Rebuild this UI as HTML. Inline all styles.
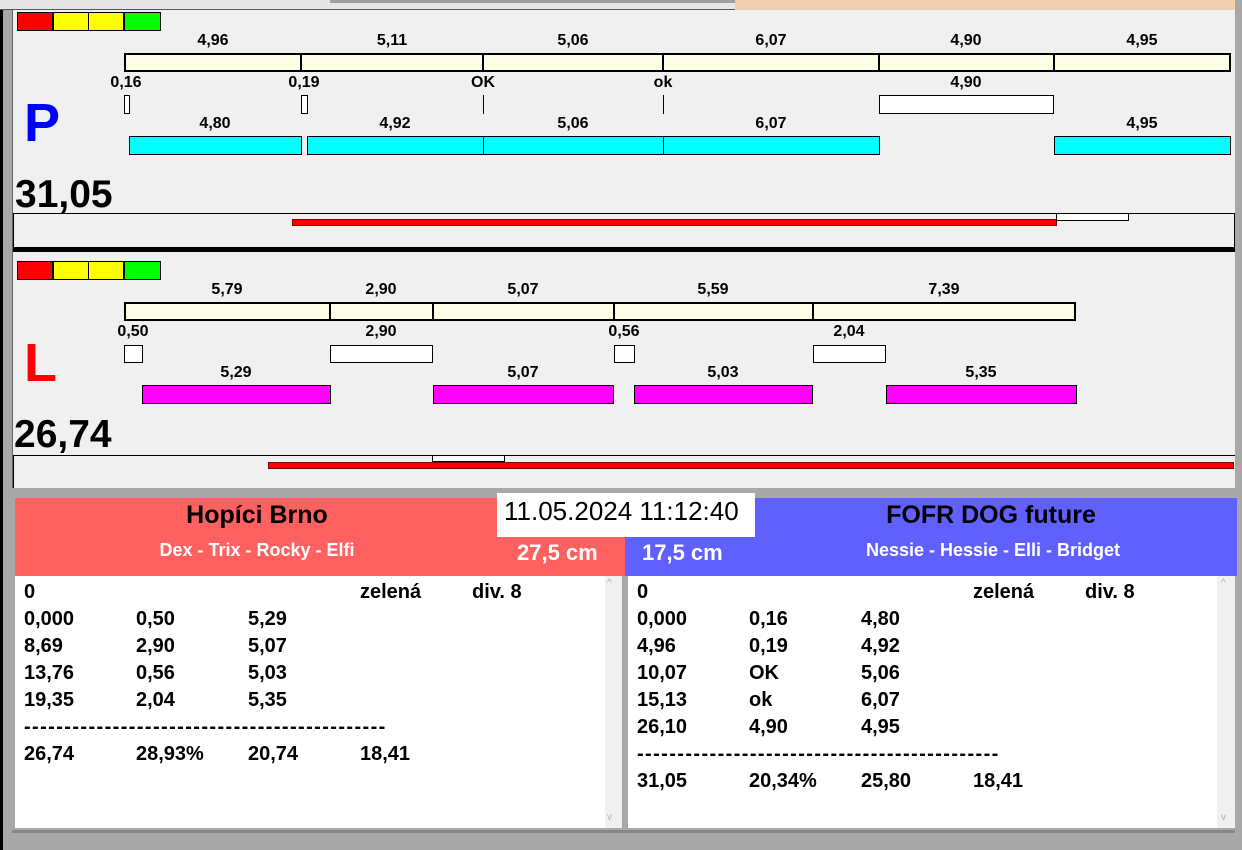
<!DOCTYPE html>
<html><head><meta charset="utf-8"><style>
*{margin:0;padding:0;box-sizing:border-box}
body{width:1242px;height:850px;background:#f0f0f0;position:relative;overflow:hidden;font-family:"Liberation Sans",Arial,sans-serif;font-weight:bold}
div{position:absolute}
.l{font-size:16px;color:#000;transform:translateX(-50%);white-space:nowrap;line-height:16px}
.y{background:#fffde6;border:2px solid #000}
.w{background:#fff;border:1px solid #000}
.c{background:#00ffff;border:1px solid #000}
.m{background:#ff00ff;border:1px solid #000}
.t{font-size:20px;line-height:27px;white-space:nowrap}
</style></head><body>
<div style="left:0;top:0;width:3px;height:850px;background:#000"></div>
<div style="left:3px;top:0;width:9px;height:850px;background:#a8a8a8"></div>
<div style="left:0;top:0;width:735px;height:10px;background:#e6e6e6;border-bottom:1px solid #555"></div>
<div style="left:330px;top:0;width:405px;height:3px;background:#a0a0a0"></div>
<div style="left:735px;top:0;width:500px;height:11px;background:#f0d0b0"></div>
<div style="left:1235px;top:0;width:7px;height:850px;background:#a8a8a8"></div>
<div style="left:12px;top:10px;width:1223px;height:480px;background:#f0f0f0;border-left:1px solid #666"></div>

<div style="left:17px;top:12px;width:36px;height:19px;background:#f00;border:1px solid #000"></div>
<div style="left:53px;top:12px;width:36px;height:19px;background:#ff0;border:1px solid #000"></div>
<div style="left:88px;top:12px;width:36px;height:19px;background:#ff0;border:1px solid #000"></div>
<div style="left:124px;top:12px;width:37px;height:19px;background:#0f0;border:1px solid #000"></div>

<div class="l" style="left:213px;top:33px">4,96</div>
<div class="l" style="left:392px;top:33px">5,11</div>
<div class="l" style="left:573px;top:33px">5,06</div>
<div class="l" style="left:771px;top:33px">6,07</div>
<div class="l" style="left:966px;top:33px">4,90</div>
<div class="l" style="left:1142px;top:33px">4,95</div>
<div class="y" style="left:124px;top:53px;width:1107px;height:19px"></div>
<div style="left:300px;top:53px;width:2px;height:19px;background:#000"></div>
<div style="left:482px;top:53px;width:2px;height:19px;background:#000"></div>
<div style="left:662px;top:53px;width:2px;height:19px;background:#000"></div>
<div style="left:878px;top:53px;width:2px;height:19px;background:#000"></div>
<div style="left:1053px;top:53px;width:2px;height:19px;background:#000"></div>

<div class="l" style="left:126px;top:75px">0,16</div>
<div class="l" style="left:304px;top:75px">0,19</div>
<div class="l" style="left:483px;top:75px">OK</div>
<div class="l" style="left:663px;top:75px">ok</div>
<div class="l" style="left:966px;top:75px">4,90</div>
<div class="w" style="left:124px;top:95px;width:6px;height:19px"></div>
<div class="w" style="left:301px;top:95px;width:7px;height:19px"></div>
<div style="left:483px;top:95px;width:1px;height:19px;background:#000"></div>
<div style="left:663px;top:95px;width:1px;height:19px;background:#000"></div>
<div class="w" style="left:879px;top:95px;width:175px;height:19px"></div>

<div style="left:24px;top:94px;font-size:54px;color:#0000ff;line-height:58px">P</div>
<div class="l" style="left:215px;top:116px">4,80</div>
<div class="l" style="left:395px;top:116px">4,92</div>
<div class="l" style="left:573px;top:116px">5,06</div>
<div class="l" style="left:771px;top:116px">6,07</div>
<div class="l" style="left:1142px;top:116px">4,95</div>
<div class="c" style="left:129px;top:136px;width:173px;height:19px"></div>
<div class="c" style="left:307px;top:136px;width:177px;height:19px"></div>
<div class="c" style="left:483px;top:136px;width:181px;height:19px"></div>
<div class="c" style="left:663px;top:136px;width:217px;height:19px"></div>
<div class="c" style="left:1054px;top:136px;width:177px;height:19px"></div>

<div style="left:15px;top:173px;font-size:39px;line-height:44px">31,05</div>
<div style="left:13px;top:213px;width:1222px;height:34px;border:1px solid #000;border-bottom:none"></div>
<div style="left:292px;top:219px;width:765px;height:7px;background:#f00;border:1px solid #800"></div>
<div class="w" style="left:1056px;top:213px;width:73px;height:8px"></div>
<div style="left:13px;top:247px;width:1222px;height:5px;background:#000"></div>

<div style="left:17px;top:261px;width:36px;height:19px;background:#f00;border:1px solid #000"></div>
<div style="left:53px;top:261px;width:36px;height:19px;background:#ff0;border:1px solid #000"></div>
<div style="left:88px;top:261px;width:36px;height:19px;background:#ff0;border:1px solid #000"></div>
<div style="left:124px;top:261px;width:37px;height:19px;background:#0f0;border:1px solid #000"></div>

<div class="l" style="left:227px;top:282px">5,79</div>
<div class="l" style="left:381px;top:282px">2,90</div>
<div class="l" style="left:523px;top:282px">5,07</div>
<div class="l" style="left:713px;top:282px">5,59</div>
<div class="l" style="left:944px;top:282px">7,39</div>
<div class="y" style="left:124px;top:302px;width:952px;height:19px"></div>
<div style="left:329px;top:302px;width:2px;height:19px;background:#000"></div>
<div style="left:432px;top:302px;width:2px;height:19px;background:#000"></div>
<div style="left:613px;top:302px;width:2px;height:19px;background:#000"></div>
<div style="left:812px;top:302px;width:2px;height:19px;background:#000"></div>

<div class="l" style="left:133px;top:324px">0,50</div>
<div class="l" style="left:381px;top:324px">2,90</div>
<div class="l" style="left:624px;top:324px">0,56</div>
<div class="l" style="left:849px;top:324px">2,04</div>
<div class="w" style="left:124px;top:345px;width:19px;height:18px"></div>
<div class="w" style="left:330px;top:345px;width:103px;height:18px"></div>
<div class="w" style="left:614px;top:345px;width:21px;height:18px"></div>
<div class="w" style="left:813px;top:345px;width:73px;height:18px"></div>

<div style="left:24px;top:334px;font-size:54px;color:#ff0000;line-height:58px">L</div>
<div class="l" style="left:236px;top:365px">5,29</div>
<div class="l" style="left:523px;top:365px">5,07</div>
<div class="l" style="left:723px;top:365px">5,03</div>
<div class="l" style="left:981px;top:365px">5,35</div>
<div class="m" style="left:142px;top:385px;width:189px;height:19px"></div>
<div class="m" style="left:433px;top:385px;width:181px;height:19px"></div>
<div class="m" style="left:634px;top:385px;width:179px;height:19px"></div>
<div class="m" style="left:886px;top:385px;width:191px;height:19px"></div>

<div style="left:14px;top:413px;font-size:39px;line-height:44px">26,74</div>
<div style="left:13px;top:455px;width:1222px;height:34px;border-top:1px solid #000;border-left:1px solid #000"></div>
<div class="w" style="left:432px;top:455px;width:73px;height:7px"></div>
<div style="left:268px;top:462px;width:966px;height:7px;background:#f00;border:1px solid #800"></div>

<div style="left:12px;top:488px;width:1223px;height:362px;background:#a8a8a8"></div>
<div style="left:15px;top:498px;width:610px;height:78px;background:#ff6060"></div>
<div style="left:625px;top:498px;width:612px;height:78px;background:#6060ff"></div>
<div style="left:497px;top:493px;width:258px;height:44px;background:#fff"></div>
<div style="left:504px;top:495px;font-size:26px;font-weight:normal;line-height:32px;white-space:nowrap">11.05.2024 11:12:40</div>
<div style="left:257px;top:500px;font-size:25px;line-height:30px;transform:translateX(-50%);white-space:nowrap">Hopíci Brno</div>
<div style="left:257px;top:539px;font-size:18px;line-height:22px;color:#fff;transform:translateX(-50%);white-space:nowrap">Dex - Trix - Rocky - Elfi</div>
<div style="left:517px;top:539px;font-size:22px;line-height:28px;color:#fff;white-space:nowrap">27,5 cm</div>
<div style="left:991px;top:500px;font-size:25px;line-height:30px;transform:translateX(-50%);white-space:nowrap">FOFR DOG future</div>
<div style="left:993px;top:539px;font-size:18px;line-height:22px;color:#fff;transform:translateX(-50%);white-space:nowrap">Nessie - Hessie - Elli - Bridget</div>
<div style="left:642px;top:539px;font-size:22px;line-height:28px;color:#fff;white-space:nowrap">17,5 cm</div>

<div style="left:15px;top:576px;width:607px;height:252px;background:#fff;border-right:17px solid #f0f0f0"></div>
<div style="left:628px;top:576px;width:607px;height:252px;background:#fff;border-right:18px solid #f0f0f0"></div>
<div style="left:607px;top:578px;font-size:10px;color:#aaa;font-weight:normal">^</div>
<div style="left:607px;top:812px;font-size:10px;color:#aaa;font-weight:normal">v</div>
<div style="left:1221px;top:578px;font-size:10px;color:#aaa;font-weight:normal">^</div>
<div style="left:1221px;top:812px;font-size:10px;color:#aaa;font-weight:normal">v</div>
<div style="left:12px;top:830px;width:1223px;height:3px;background:#888"></div>

<div class="t" style="left:24px;top:579px">0</div>
<div class="t" style="left:360px;top:579px">zelená</div>
<div class="t" style="left:472px;top:579px">div. 8</div>
<div class="t" style="left:24px;top:606px">0,000</div>
<div class="t" style="left:136px;top:606px">0,50</div><div class="t" style="left:248px;top:606px">5,29</div>
<div class="t" style="left:24px;top:633px">8,69</div><div class="t" style="left:136px;top:633px">2,90</div><div class="t" style="left:248px;top:633px">5,07</div>
<div class="t" style="left:24px;top:660px">13,76</div><div class="t" style="left:136px;top:660px">0,56</div><div class="t" style="left:248px;top:660px">5,03</div>
<div class="t" style="left:24px;top:687px">19,35</div><div class="t" style="left:136px;top:687px">2,04</div><div class="t" style="left:248px;top:687px">5,35</div>
<div class="t" style="left:24px;top:714px;letter-spacing:1.4px">---------------------------------------------</div>
<div class="t" style="left:24px;top:741px">26,74</div><div class="t" style="left:136px;top:741px">28,93%</div><div class="t" style="left:248px;top:741px">20,74</div><div class="t" style="left:360px;top:741px">18,41</div>

<div class="t" style="left:637px;top:579px">0</div>
<div class="t" style="left:973px;top:579px">zelená</div>
<div class="t" style="left:1085px;top:579px">div. 8</div>
<div class="t" style="left:637px;top:606px">0,000</div><div class="t" style="left:749px;top:606px">0,16</div><div class="t" style="left:861px;top:606px">4,80</div>
<div class="t" style="left:637px;top:633px">4,96</div><div class="t" style="left:749px;top:633px">0,19</div><div class="t" style="left:861px;top:633px">4,92</div>
<div class="t" style="left:637px;top:660px">10,07</div><div class="t" style="left:749px;top:660px">OK</div><div class="t" style="left:861px;top:660px">5,06</div>
<div class="t" style="left:637px;top:687px">15,13</div><div class="t" style="left:749px;top:687px">ok</div><div class="t" style="left:861px;top:687px">6,07</div>
<div class="t" style="left:637px;top:714px">26,10</div><div class="t" style="left:749px;top:714px">4,90</div><div class="t" style="left:861px;top:714px">4,95</div>
<div class="t" style="left:637px;top:741px;letter-spacing:1.4px">---------------------------------------------</div>
<div class="t" style="left:637px;top:768px">31,05</div><div class="t" style="left:749px;top:768px">20,34%</div><div class="t" style="left:861px;top:768px">25,80</div><div class="t" style="left:973px;top:768px">18,41</div>
</body></html>
